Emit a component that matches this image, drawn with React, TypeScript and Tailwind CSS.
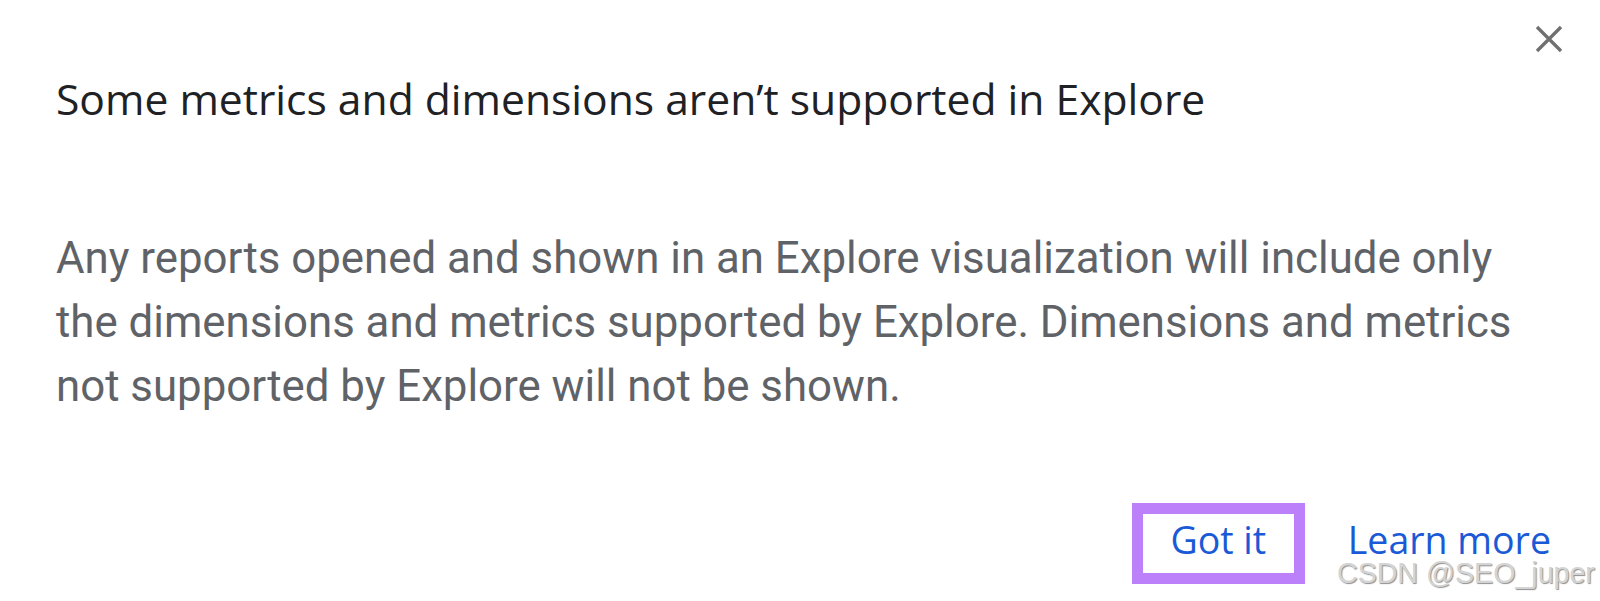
import React from "react";

export default function App() {
  return (
    <div className="relative w-[1600px] h-[601px] overflow-hidden bg-white">
      <div className="flex flex-col w-full h-full">
        <div className="flex justify-end pt-[25px] pr-[37px] h-[70px]">
          <button aria-label="Close" className="w-[28px] h-[28px] flex items-center justify-center">
            <svg width="28" height="28" viewBox="0 0 28 28">
              <path d="M2 2 L26 26 M26 2 L2 26" stroke="#707070" strokeWidth="3.3" strokeLinecap="butt" />
            </svg>
          </button>
        </div>
        <h1
          className="pl-[56px] text-[#202124] text-[42.6px] leading-[56px] font-normal whitespace-nowrap"
          style={{ fontFamily: '"Open Sans", "Noto Sans", sans-serif' }}
        >
          Some metrics and dimensions aren’t supported in Explore
        </h1>
        <p
          className="pl-[56px] pt-[100px] w-[1590px] text-[#5f6368] text-[43.8px] leading-[64px] whitespace-nowrap"
          style={{ fontFamily: 'Roboto, "Liberation Sans", sans-serif' }}
        >
          Any reports opened and shown in an Explore visualization will include only
          <br />
          the dimensions and metrics supported by Explore. Dimensions and metrics
          <br />
          not supported by Explore will not be shown.
        </p>
        <div className="flex justify-end items-center gap-[43px] pr-[49px] mt-auto mb-[17px]">
          <div className="border-[11px] border-[#bd80fb] w-[173px] h-[81px] flex items-center justify-center pb-[8px]">
            <span
              className="text-[#1a5ad6] text-[37.5px] leading-none"
              style={{ fontFamily: '"Open Sans", "Noto Sans", sans-serif' }}
            >
              Got it
            </span>
          </div>
          <span
            className="text-[#1a5ad6] text-[37.5px] leading-none pb-[8px]"
            style={{ fontFamily: '"Open Sans", "Noto Sans", sans-serif' }}
          >
            Learn more
          </span>
        </div>
      </div>
      <div
        className="absolute left-[1337px] top-[559px] text-[28.6px] leading-none text-[#d4d4d4] whitespace-nowrap"
        style={{ fontFamily: '"Liberation Sans", Arial, sans-serif', textShadow: "1px 1px 1px #909090" }}
      >
        CSDN @SEO_juper
      </div>
    </div>
  );
}
